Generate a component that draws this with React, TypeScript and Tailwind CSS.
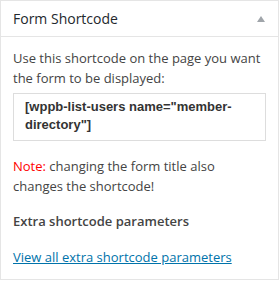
import React from 'react';

export default function App() {
    return (
        <div className="w-[279px] h-[280px] bg-white border border-[#e5e5e5] font-['Open_Sans',sans-serif] text-[#444]">
            {/* Panel header */}
            <div className="h-[36px] border-b border-[#e5e5e5] flex items-center justify-between px-3">
                <h2 className="text-[14px] leading-[1.4] text-[#23282d]">Form Shortcode</h2>
                <svg width="8" height="6" viewBox="0 0 8 6" className="mr-[1px] mt-[1px]">
                    <path d="M4 0 L8 6 L0 6 Z" fill="#a0a5aa" />
                </svg>
            </div>

            {/* Panel body */}
            <div className="px-3 pt-3 text-[13px] leading-[1.5]">
                <p>Use this shortcode on the page you want the form to be displayed:</p>
                <div className="mt-[5px] border border-[#ddd] pl-[11px] pr-2 pt-[4px] pb-[6px] font-['Liberation_Sans',Arial,sans-serif] font-bold text-[13px] leading-[18px] text-[#333]">
                    [wppb-list-users name="member-directory"]
                </div>
                <p className="mt-4">
                    <span className="text-[#ff0000]">Note:</span> changing the form title also changes the shortcode!
                </p>
                <p className="mt-4 font-semibold">Extra shortcode parameters</p>
                <p className="mt-4">
                    <a href="#" className="text-[#0073aa] underline">View all extra shortcode parameters</a>
                </p>
            </div>
        </div>
    );
}
